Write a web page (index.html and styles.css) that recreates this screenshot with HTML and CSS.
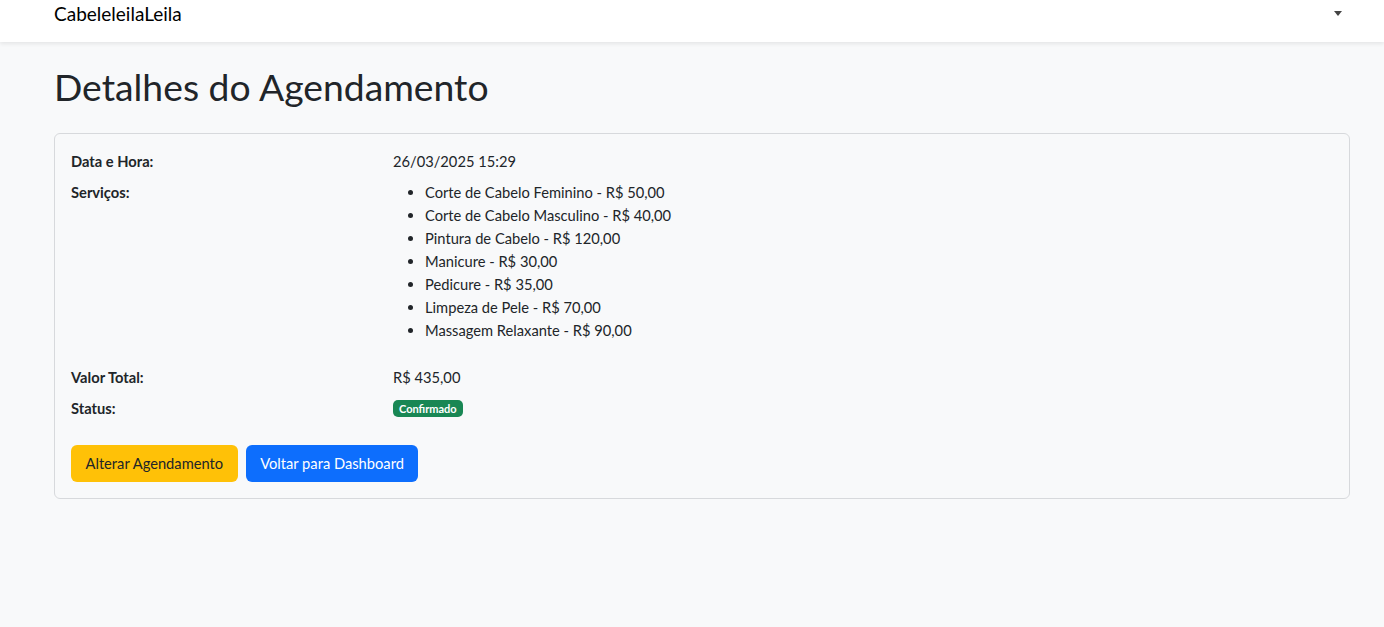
FILE: index.html
```html
<!DOCTYPE html>
<html lang="pt-BR">
<head>
<meta charset="utf-8">
<title>Detalhes do Agendamento</title>
<link rel="stylesheet" href="styles.css">
</head>
<body>
<nav class="navbar">
  <span class="brand">CabeleleilaLeila</span>
  <span class="caret"></span>
</nav>
<main class="container">
  <h1 class="title">Detalhes do Agendamento</h1>
  <section class="card">
    <div class="row">
      <div class="label">Data e Hora:</div>
      <div class="value">26/03/2025 15:29</div>
    </div>
    <div class="row">
      <div class="label">Serviços:</div>
      <div class="value">
        <ul class="services">
          <li>Corte de Cabelo Feminino - R$ 50,00</li>
          <li>Corte de Cabelo Masculino - R$ 40,00</li>
          <li>Pintura de Cabelo - R$ 120,00</li>
          <li>Manicure - R$ 30,00</li>
          <li>Pedicure - R$ 35,00</li>
          <li>Limpeza de Pele - R$ 70,00</li>
          <li>Massagem Relaxante - R$ 90,00</li>
        </ul>
      </div>
    </div>
    <div class="row">
      <div class="label">Valor Total:</div>
      <div class="value">R$ 435,00</div>
    </div>
    <div class="row">
      <div class="label">Status:</div>
      <div class="value"><span class="badge">Confirmado</span></div>
    </div>
    <div class="actions">
      <button class="btn btn-warning">Alterar Agendamento</button>
      <button class="btn btn-primary">Voltar para Dashboard</button>
    </div>
  </section>
</main>
</body>
</html>
```
FILE: styles.css
```css
* { box-sizing: border-box; }
body {
  margin: 0;
  background: #f8f9fa;
  color: #212529;
  font-family: Lato, "Noto Sans", sans-serif;
  font-size: 14.7px;
  line-height: 23px;
}
.navbar {
  height: 42px;
  background: #fff;
  box-shadow: 0 2px 4px rgba(0,0,0,0.08);
  display: flex;
  align-items: flex-start;
  justify-content: space-between;
  padding: 0 42px 0 54px;
}
.brand {
  font-size: 19px;
  line-height: 28px;
  color: #000;
}
.caret {
  margin-top: 11px;
  width: 0; height: 0;
  border-left: 4.5px solid transparent;
  border-right: 4.5px solid transparent;
  border-top: 5px solid #444;
}
.container {
  margin-left: 54px;
  width: 1296px;
}
.title {
  margin: 23px 0 25px;
  font-size: 37.3px;
  line-height: 43px;
  font-weight: 400;
}
.card {
  border: 1px solid #d7d9dc;
  border-radius: 6px;
  padding: 16px;
}
.row {
  display: grid;
  grid-template-columns: 322px 1fr;
  margin-bottom: 8px;
}
.label { font-weight: 700; }
.services {
  margin: 0 0 16px;
  padding-left: 32px;
}
.badge {
  display: inline-block;
  background: #198754;
  color: #fff;
  font-size: 11px;
  font-weight: 700;
  line-height: 17px;
  padding: 0 6px;
  border-radius: 5px;
  vertical-align: 1px;
}
.actions {
  display: flex;
  gap: 8px;
  margin-top: 25px;
}
.btn {
  font-family: inherit;
  font-size: 14.7px;
  line-height: 23px;
  height: 37px;
  padding: 6px 14.5px;
  border: none;
  border-radius: 6px;
}
.btn-warning { background: #ffc107; color: #212529; }
.btn-primary { background: #0d6efd; color: #fff; }
```
